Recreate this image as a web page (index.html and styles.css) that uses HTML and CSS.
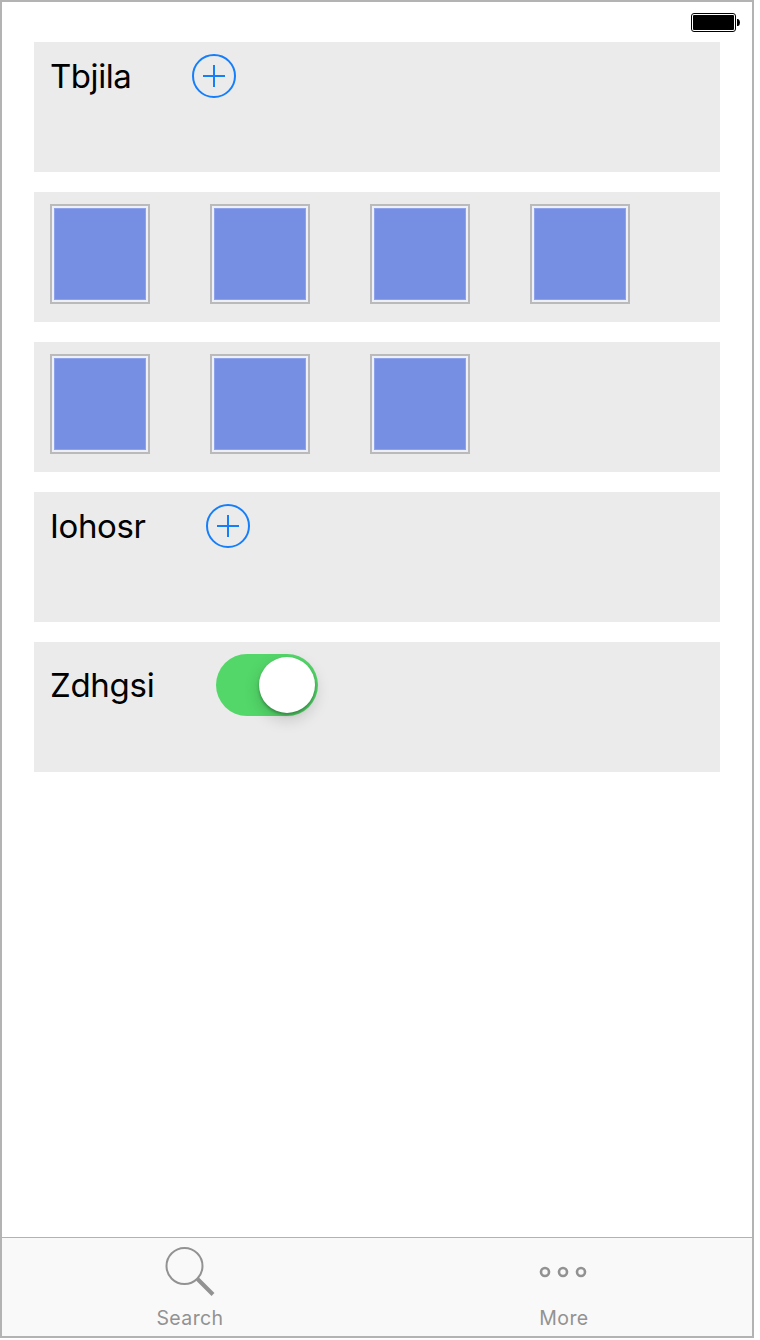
FILE: index.html
```html
<!DOCTYPE html>
<html lang="en">
<head>
<meta charset="utf-8">
<title>Search</title>
<link rel="stylesheet" href="styles.css">
</head>
<body>
<div class="screen">
  <header class="status">
    <svg class="battery" width="50" height="20" viewBox="0 0 50 20">
      <rect x="0.5" y="0.5" width="44" height="18" rx="2.5" fill="#fff" stroke="#000"/>
      <rect x="2" y="2" width="41" height="15" rx="1" fill="#000"/>
      <path d="M46 6h1.2q1.8 1 1.8 3.5t-1.8 3.5H46z" fill="#000"/>
    </svg>
  </header>
  <main class="rows">
    <section class="row">
      <span class="label label-first">Tbjila</span>
      <svg class="add" width="44" height="44" viewBox="0 0 44 44"><circle cx="22" cy="22" r="21"/><path d="M22 11v22M11 22h22"/></svg>
    </section>
    <section class="row">
      <div class="tile"></div><div class="tile"></div><div class="tile"></div><div class="tile"></div>
    </section>
    <section class="row">
      <div class="tile"></div><div class="tile"></div><div class="tile"></div>
    </section>
    <section class="row">
      <span class="label label-second">Iohosr</span>
      <svg class="add" width="44" height="44" viewBox="0 0 44 44"><circle cx="22" cy="22" r="21"/><path d="M22 11v22M11 22h22"/></svg>
    </section>
    <section class="row">
      <span class="label label-third">Zdhgsi</span>
      <div class="switch"><div class="knob"></div></div>
    </section>
  </main>
  <nav class="tabs">
    <div class="tab tab-search">
      <svg class="tab-icon" width="52" height="52" viewBox="0 0 52 52"><circle cx="20.5" cy="20" r="18"/><path class="handle" d="M33.5 33 49 48.5"/></svg>
      <span class="tab-label">Search</span>
    </div>
    <div class="tab tab-more">
      <svg class="tab-icon dots" width="52" height="52" viewBox="0 0 52 52"><circle cx="7" cy="26" r="4"/><circle cx="25" cy="26" r="4"/><circle cx="43" cy="26" r="4"/></svg>
      <span class="tab-label">More</span>
    </div>
  </nav>
</div>
</body>
</html>
```
FILE: styles.css
```css
* { box-sizing: border-box; }
body { margin: 0; background: #fff; font-family: Inter, "Liberation Sans", sans-serif; }
.screen { width: 754px; height: 1338px; border: 2px solid #b3b3b3; display: flex; flex-direction: column; }
.status { height: 40px; padding: 11px 11px 0 0; display: flex; justify-content: flex-end; align-items: flex-start; }
.rows { flex: 1; padding: 0 32px; display: flex; flex-direction: column; gap: 20px; }
.row { height: 130px; padding: 12px 16px; background: #ebebeb; display: flex; align-items: flex-start; gap: 60px; }
.label { height: 44px; line-height: 44px; font-size: 33px; color: #000; white-space: nowrap; }
.label-first { width: 82px; letter-spacing: -0.45px; }
.label-second { width: 96px; letter-spacing: -0.35px; }
.label-third { width: 106px; height: 62px; line-height: 62px; letter-spacing: -0.3px; }
.add { fill: none; stroke: #157efb; stroke-width: 2; }
.tile { width: 100px; height: 100px; background: #768fe3; border: 2px solid #bababa; box-shadow: inset 0 0 0 2px #edf0f8, inset 0 0 0 3px #8da2ea; }
.switch { width: 102px; height: 62px; border-radius: 31px; padding: 3px; background: #53d769; display: flex; justify-content: flex-end; }
.knob { width: 56px; height: 56px; border-radius: 50%; background: #fff; box-shadow: 0 6px 16px rgba(0,0,0,.18), 0 2px 3px rgba(0,0,0,.28); }
.tabs { height: 99px; border-top: 1px solid #b2b2b2; background: #f9f9f9; display: flex; color: #929292; }
.tab { flex: 1; padding-top: 8px; display: flex; flex-direction: column; align-items: center; }
.tab-search { padding-left: 1px; }
.tab-more { padding-right: 1px; }
.tab-icon { fill: none; stroke: #929292; stroke-width: 2; }
.handle { stroke-width: 4; }
.dots { stroke-width: 2.6; }
.tab-label { margin-top: 8px; font-size: 19.5px; line-height: 24px; letter-spacing: .4px; }
```
